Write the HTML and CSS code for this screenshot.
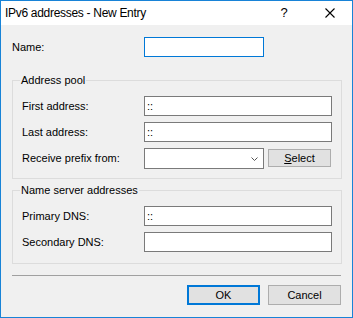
FILE: index.html
```html
<!DOCTYPE html>
<html lang="en">
<head>
    <meta charset="UTF-8">
    <title>IPv6 addresses - New Entry</title>
    <link rel="stylesheet" href="styles.css">
</head>
<body>
    <div class="dialog">
        <div class="titlebar">
            <span class="title">IPv6 addresses - New Entry</span>
            <span class="help">?</span>
            <span class="close">
                <svg width="10" height="10" viewBox="0 0 10 10"><path d="M0.5 0.5L9.5 9.5M9.5 0.5L0.5 9.5" stroke="#000" stroke-width="1.1" fill="none"/></svg>
            </span>
        </div>

        <div class="content">
            <div class="row name-row">
                <label>Name:</label>
                <input type="text" class="field focused" value="">
            </div>

            <fieldset class="group pool">
                <legend>Address pool</legend>
                <div class="rows">
                    <div class="row">
                        <label>First address:</label>
                        <input type="text" class="field" value="::">
                    </div>
                    <div class="row">
                        <label>Last address:</label>
                        <input type="text" class="field" value="::">
                    </div>
                    <div class="row combo-row">
                        <label>Receive prefix from:</label>
                        <div class="combo">
                            <svg width="7" height="4" viewBox="0 0 7 4"><polyline points="0.5,0.5 3.5,3.5 6.5,0.5" stroke="#555" stroke-width="1" fill="none"/></svg>
                        </div>
                        <button class="btn select"><u>S</u>elect</button>
                    </div>
                </div>
            </fieldset>

            <fieldset class="group dns">
                <legend>Name server addresses</legend>
                <div class="rows">
                    <div class="row">
                        <label>Primary DNS:</label>
                        <input type="text" class="field" value="::">
                    </div>
                    <div class="row">
                        <label>Secondary DNS:</label>
                        <input type="text" class="field" value="">
                    </div>
                </div>
            </fieldset>

            <div class="separator"></div>

            <div class="buttons">
                <button class="btn default">OK</button>
                <button class="btn">Cancel</button>
            </div>
        </div>
    </div>
</body>
</html>
```

FILE: styles.css
```css
*{
    box-sizing: border-box;
}
body{
    margin: 0;
    font-family: "Liberation Sans", Arial, sans-serif;
    font-size: 11px;
    color: #000;
}
.dialog{
    width: 353px;
    height: 318px;
    border: 1px solid #1883d7;
    background: #f0f0f0;
    overflow: hidden;
}
.titlebar{
    display: flex;
    align-items: center;
    height: 24px;
    background: #fff;
}
.titlebar .title{
    flex: 1;
    padding-left: 4px;
    font-size: 12px;
    letter-spacing: -0.3px;
    line-height: 24px;
}
.titlebar .help{
    width: 46px;
    text-align: center;
    font-size: 13px;
    line-height: 24px;
}
.titlebar .close{
    width: 45px;
    height: 24px;
    display: flex;
    justify-content: center;
    align-items: center;
}
.content{
    padding: 12px 11px 0 11px;
}
.row{
    display: grid;
    grid-template-columns: 122px 1fr;
    align-items: center;
}
.name-row{
    grid-template-columns: 132px 120px;
}
.field{
    height: 20px;
    width: 100%;
    margin: 0;
    padding: 0 2px;
    border: 1px solid #7a7a7a;
    background: #fff;
    font-family: inherit;
    font-size: 11px;
    color: #000;
    outline: none;
}
.field.focused{
    border-color: #0078d7;
}
.group{
    min-width: 0;
    margin: 17px -1px 0 0;
    padding: 9px;
    border: 1px solid #dcdcdc;
}
.group legend{
    padding: 0 1px;
    margin-left: -2px;
    line-height: 13px;
}
.group.dns{
    margin-top: 5px;
    padding-bottom: 11px;
}
.rows{
    display: flex;
    flex-direction: column;
    gap: 6px;
}
.combo-row{
    grid-template-columns: 122px 120px 67px;
    align-items: start;
}
.combo-row label{
    line-height: 21px;
}
.combo{
    height: 21px;
    display: flex;
    justify-content: flex-end;
    align-items: center;
    padding-right: 5px;
    border: 1px solid #7a7a7a;
    background: #fff;
}
.btn{
    height: 20px;
    width: 73px;
    margin: 0;
    padding: 0;
    border: 1px solid #adadad;
    background: #e1e1e1;
    font-family: inherit;
    font-size: 11px;
    color: #000;
}
.btn.select{
    width: 63px;
    height: 18px;
    margin: 1px 0 0 4px;
}
.btn.default{
    border: 2px solid #0078d7;
}
.separator{
    height: 1px;
    margin-top: 11px;
    background: #a0a0a0;
}
.buttons{
    display: flex;
    justify-content: flex-end;
    gap: 8px;
    margin-top: 9px;
}
```
